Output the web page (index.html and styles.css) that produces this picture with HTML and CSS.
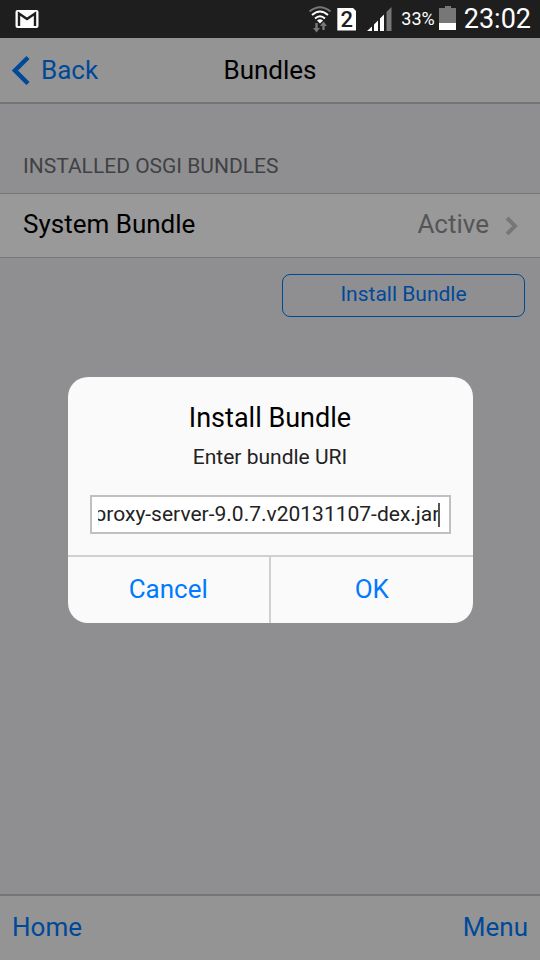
FILE: index.html
```html
<!DOCTYPE html>
<html lang="en">
<head>
<meta charset="utf-8">
<meta name="viewport" content="width=device-width, initial-scale=1">
<title>Bundles</title>
<link rel="stylesheet" href="styles.css">
</head>
<body>
<div class="status">
  <svg class="mail" width="24" height="20" viewBox="0 0 24 20" aria-hidden="true">
    <rect x="0.500" y="1" width="23" height="18" rx="2" fill="#fff"/>
    <path d="M4 17V4.500L12 10L20 4.500V17" fill="none" stroke="#1e1e1e" stroke-width="2.400"/>
  </svg>
  <svg width="24" height="28" viewBox="0 0 24 28" fill="none" aria-hidden="true">
    <path d="M1.500 6.500Q12 -2 22.500 6.500" stroke="#777" stroke-width="2"/>
    <path d="M4 10Q12 3 20 10M7 13.500Q12 9 17 13.500" stroke="#fff" stroke-width="2"/>
    <path d="M9 15.500Q12 13 15 15.500L12 18.500Z" fill="#fff"/>
    <path d="M7.300 18h2.400v5h2.300l-3.500 4.500L5 23h2.300zM14.300 25h2.400v-4H19l-3.500-4.500L12 21h2.300z" fill="#777"/>
  </svg>
  <span class="sim">2</span>
  <svg class="signal" width="25" height="26" viewBox="0 0 25 26" aria-hidden="true">
    <path d="M0 25L5 20.500V25ZM7 18.500L11 14.500V25H7ZM13 12.500L17 8.500V25H13Z" fill="#fff"/>
    <path d="M19.500 6L24.500 1V25H19.500Z" fill="#777"/>
  </svg>
  <span class="percent">33%</span>
  <svg width="17" height="26" viewBox="0 0 17 26" aria-hidden="true">
    <path d="M0 2H6V0H12V2H17V17H0Z" fill="#777"/>
    <path d="M0 17H17V24H0Z" fill="#fff"/>
  </svg>
  <span class="clock">23:02</span>
</div>

<div class="app">
  <header class="navbar">
    <a class="back" href="#">
      <svg width="18" height="30" viewBox="0 0 18 30" aria-hidden="true">
        <path d="M16 2.500L3 15.500L16 28.500" fill="none" stroke="#007aff" stroke-width="4.500"/>
      </svg>
      Back
    </a>
    <h1 class="title">Bundles</h1>
  </header>
  <main class="page">
    <h2 class="group">INSTALLED OSGI BUNDLES</h2>
    <a class="item" href="#">
      <span class="name">System Bundle</span>
      <span class="state">Active</span>
      <svg class="chevron" width="13" height="20" viewBox="0 0 13 20" aria-hidden="true">
        <path d="M2 3L10 11L2 19" fill="none" stroke="#c7c7cc" stroke-width="4"/>
      </svg>
    </a>
    <button class="install" type="button">Install Bundle</button>
  </main>
  <footer class="toolbar">
    <a href="#">Home</a>
    <a href="#">Menu</a>
  </footer>
  <div class="overlay">
    <form class="modal" role="dialog" aria-labelledby="modal-title">
      <div class="modal-body">
        <h2 class="modal-title" id="modal-title">Install Bundle</h2>
        <label class="modal-text" for="uri">Enter bundle URI</label>
        <div class="field">
          <input id="uri" type="text" value="proxy-server-9.0.7.v20131107-dex.jar">
        </div>
      </div>
      <div class="modal-buttons">
        <button type="button">Cancel</button>
        <button type="button">OK</button>
      </div>
    </form>
  </div>
</div>
<script src="app.js"></script>
</body>
</html>
```
FILE: styles.css
```css
* {
  box-sizing: border-box;
}

body {
  margin: 0;
  min-height: 100vh;
  display: flex;
  flex-direction: column;
  font-family: Roboto, "Liberation Sans", sans-serif;
  font-size: 26px;
  line-height: 32px;
  color: #000;
}

a {
  color: #007aff;
  text-decoration: none;
}

h1,
h2 {
  margin: 0;
  font-weight: 400;
}

button {
  font-family: inherit;
  color: #007aff;
  cursor: pointer;
}

.status {
  display: flex;
  align-items: center;
  height: 38px;
  padding: 0 9px 0 15px;
  background: #1e1e1e;
  color: #fff;
}

.mail {
  margin-right: auto;
}

.sim {
  width: 19px;
  height: 23px;
  margin: 0 11px 0 5px;
  background: #fff;
  color: #1e1e1e;
  font-size: 22px;
  font-weight: 500;
  line-height: 24px;
  text-align: center;
  clip-path: polygon(0 0, 80% 0, 100% 16%, 100% 100%, 0 100%);
}

.signal {
  margin-right: 9px;
}

.percent {
  margin-right: 4px;
  font-size: 18px;
}

.clock {
  margin-left: 8px;
  font-size: 27px;
}

.app {
  position: relative;
  flex: 1;
  display: flex;
  flex-direction: column;
  background: #efeff4;
}

.navbar {
  display: grid;
  grid-template-columns: 1fr auto 1fr;
  align-items: center;
  height: 66px;
  padding: 0 12px;
  background: #f7f7f8;
  border-bottom: 2px solid #c4c4c4;
}

.back {
  display: flex;
  align-items: center;
  gap: 11px;
}

.title {
  font-size: 26px;
}

.page {
  flex: 1;
  display: flex;
  flex-direction: column;
}

.group {
  margin: 49px 23px 14px;
  font-size: 21px;
  line-height: 26px;
  color: #6d6d72;
}

.item {
  display: flex;
  align-items: center;
  height: 65px;
  padding: 0 22px 4px 23px;
  background: #fff;
  border-top: 1px solid #c8c7cc;
  border-bottom: 1px solid #c8c7cc;
  color: #000;
}

.name {
  flex: 1;
}

.state {
  margin-right: 16px;
  color: #8e8e93;
}

.chevron {
  margin-top: 2px;
}

.install {
  align-self: flex-end;
  width: 45%;
  height: 43px;
  margin: 16px 15px;
  padding: 0 0 4px;
  border: 1px solid #007aff;
  border-radius: 8px;
  background: transparent;
  font-size: 21px;
}

.toolbar {
  display: flex;
  align-items: center;
  justify-content: space-between;
  height: 66px;
  padding: 0 12px 2px;
  background: #f7f7f8;
  border-top: 2px solid #c4c4c4;
}

.overlay {
  position: absolute;
  inset: 0;
  display: flex;
  align-items: center;
  justify-content: center;
  padding-top: 2px;
  background: rgba(0, 0, 0, 0.4);
}

.modal {
  width: 75%;
  overflow: hidden;
  border-radius: 20px;
  background: #fafafa;
}

.modal-body {
  display: flex;
  flex-direction: column;
  padding: 25px 22px 21px;
  text-align: center;
  border-bottom: 2px solid #d0d0d0;
}

.modal-title {
  font-size: 27px;
}

.modal-text {
  margin-top: 7px;
  font-size: 21px;
  color: #222;
}

.field {
  position: relative;
  margin-top: 22px;
}

.field::after {
  content: "";
  position: absolute;
  top: 8px;
  right: 11px;
  width: 2px;
  height: 24px;
  background: #555;
}

.field input {
  display: block;
  width: 100%;
  height: 39px;
  padding: 0 9px 2px 6px;
  border: 2px solid #c0c0c0;
  border-radius: 0;
  background: #fff;
  color: #222;
  font-family: inherit;
  font-size: 21px;
}

.modal-buttons {
  display: flex;
}

.modal-buttons button {
  flex: 1;
  height: 66px;
  padding: 0 0 2px;
  border: 0;
  background: transparent;
  font-size: 26px;
}

.modal-buttons button + button {
  border-left: 2px solid #d0d0d0;
}
```
FILE: app.js
```js
// Show the end of a long URI.
const uri = document.getElementById("uri");
uri.scrollLeft = uri.scrollWidth;
```
